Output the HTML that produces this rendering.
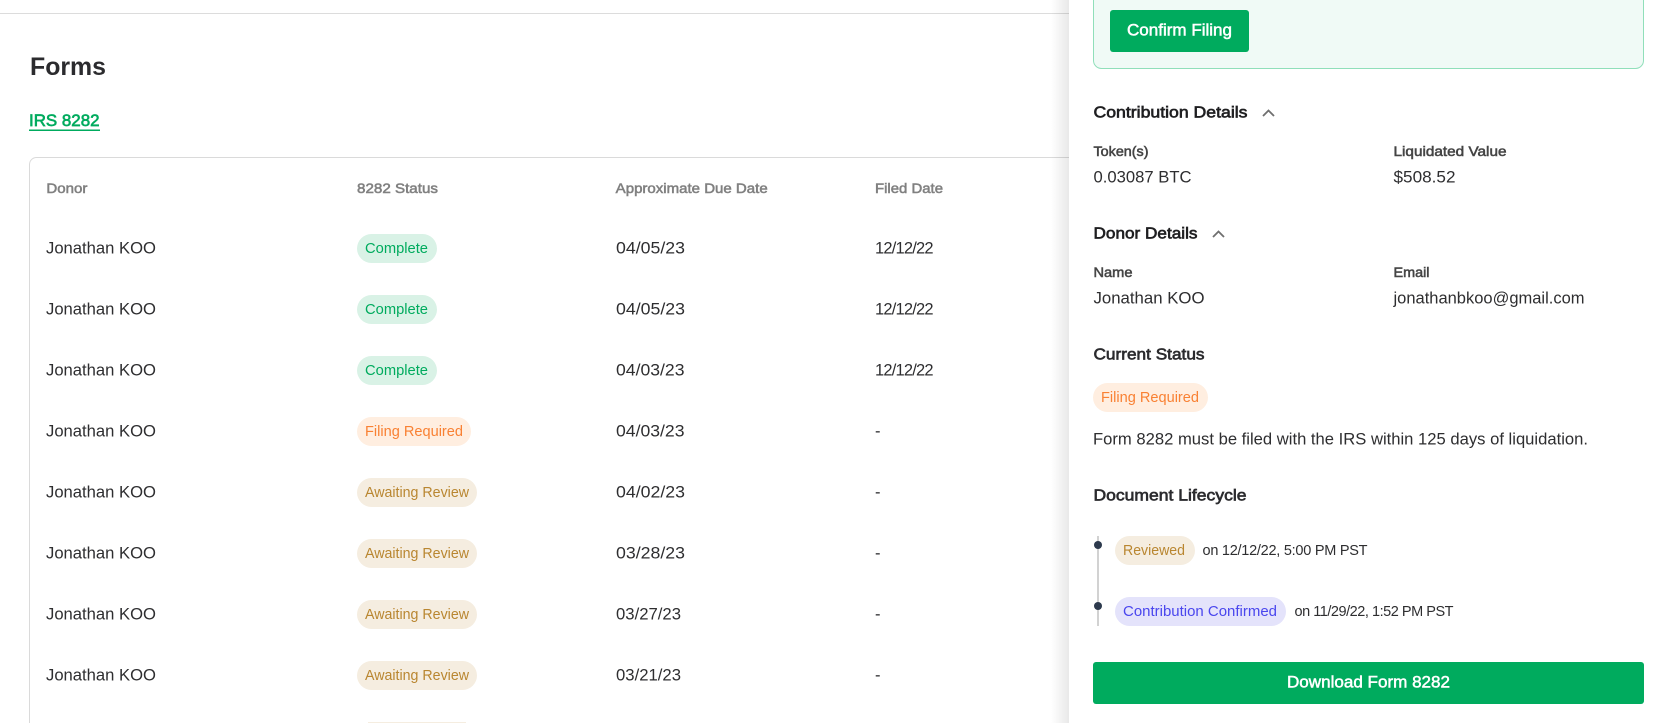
<!DOCTYPE html>
<html lang="en">
<head>
<meta charset="utf-8">
<title>Forms</title>
<style>
html,body{margin:0;padding:0;width:1666px;height:723px;overflow:hidden;background:#fff}
svg{display:block}
text{font-family:"Liberation Sans",sans-serif}
.h{font-size:14px;fill:#808080;stroke:#808080;stroke-width:.55px}
.c{font-size:16.5px;fill:#2e2e30}
.pt{font-size:14.5px}
.g{fill:#00ab5e}.gb{fill:#d9f2e6}
.o{fill:#f98133}.ob{fill:#ffeee0}
.a{fill:#b98630}.ab{fill:#f5ede0}
.b{fill:#4a46ee}.bb{fill:#e4e3fb}
.st{font-size:16px;fill:#1f1f21;stroke:#1f1f21;stroke-width:.65px}
.lb{font-size:14px;fill:#444;stroke:#444;stroke-width:.55px}
.v{font-size:16.5px;fill:#2e2e30}
.on{font-size:14.5px;fill:#2e2e30}
.btn{font-size:16.5px;fill:#fff;stroke:#fff;stroke-width:.5px}
</style>
</head>
<body>
<svg width="1666" height="723" viewBox="0 0 1666 723" xmlns="http://www.w3.org/2000/svg">
<defs>
<linearGradient id="sh" x1="0" x2="1" y1="0" y2="0">
<stop offset="0" stop-color="#000" stop-opacity="0"/>
<stop offset="1" stop-color="#000" stop-opacity=".09"/>
</linearGradient>
<g id="nm"><text class="c" x="46" y="253.500" textLength="110" lengthAdjust="spacingAndGlyphs">Jonathan KOO</text></g>
<g id="complete"><use href="#nm"/><rect class="gb" x="357" y="234" width="80" height="29" rx="14.5"/><text class="pt g" x="365" y="253" textLength="63" lengthAdjust="spacingAndGlyphs">Complete</text></g>
<g id="filing"><use href="#nm"/><rect class="ob" x="357" y="234" width="114" height="29" rx="14.5"/><text class="pt o" x="365" y="253" textLength="98" lengthAdjust="spacingAndGlyphs">Filing Required</text></g>
<g id="await"><use href="#nm"/><rect class="ab" x="357" y="234" width="120" height="29" rx="14.5"/><text class="pt a" x="365" y="253" textLength="104" lengthAdjust="spacingAndGlyphs">Awaiting Review</text></g>
</defs>

<rect x="0" y="13" width="1070" height="1" fill="#dcdcdc"/>

<text x="30" y="75" font-size="25" font-weight="bold" fill="#2b2b2e" textLength="76" lengthAdjust="spacingAndGlyphs">Forms</text>
<text x="29" y="126" font-size="16.5" fill="#00ab5e" stroke="#00ab5e" stroke-width=".65" textLength="70.5" lengthAdjust="spacingAndGlyphs">IRS 8282</text>
<rect x="29" y="129.500" width="71" height="1.500" fill="#00ab5e"/>

<path d="M29.500 723V164.500a7 7 0 0 1 7-7H1069" fill="none" stroke="#dadada"/>

<text class="h" x="46.400" y="193" textLength="41" lengthAdjust="spacingAndGlyphs">Donor</text>
<text class="h" x="357" y="193" textLength="81" lengthAdjust="spacingAndGlyphs">8282 Status</text>
<text class="h" x="615.700" y="193" textLength="152" lengthAdjust="spacingAndGlyphs">Approximate Due Date</text>
<text class="h" x="875" y="193" textLength="68" lengthAdjust="spacingAndGlyphs">Filed Date</text>

<use href="#complete"/>
<text class="c" x="616" y="253.500" textLength="69" lengthAdjust="spacingAndGlyphs">04/05/23</text>
<text class="c" x="875" y="253.500" textLength="58.500">12/12/22</text>

<use href="#complete" y="61"/>
<text class="c" x="616" y="314.500" textLength="69" lengthAdjust="spacingAndGlyphs">04/05/23</text>
<text class="c" x="875" y="314.500" textLength="58.500">12/12/22</text>

<use href="#complete" y="122"/>
<text class="c" x="616" y="375.500" textLength="68.500" lengthAdjust="spacingAndGlyphs">04/03/23</text>
<text class="c" x="875" y="375.500" textLength="58.500">12/12/22</text>

<use href="#filing" y="183"/>
<text class="c" x="616" y="436.500" textLength="68.500" lengthAdjust="spacingAndGlyphs">04/03/23</text>
<text class="c" x="875" y="436.500">-</text>

<use href="#await" y="244"/>
<text class="c" x="616" y="497.500" textLength="69" lengthAdjust="spacingAndGlyphs">04/02/23</text>
<text class="c" x="875" y="497.500">-</text>

<use href="#await" y="305"/>
<text class="c" x="616" y="558.500" textLength="69" lengthAdjust="spacingAndGlyphs">03/28/23</text>
<text class="c" x="875" y="558.500">-</text>

<use href="#await" y="366"/>
<text class="c" x="616" y="619.500" textLength="65" lengthAdjust="spacingAndGlyphs">03/27/23</text>
<text class="c" x="875" y="619.500">-</text>

<use href="#await" y="427"/>
<text class="c" x="616" y="680.500" textLength="65" lengthAdjust="spacingAndGlyphs">03/21/23</text>
<text class="c" x="875" y="680.500">-</text>

<rect class="ab" x="368" y="722" width="98" height="1"/>

<!-- side panel -->
<rect x="1051" y="0" width="18" height="723" fill="url(#sh)"/>
<rect x="1069" y="0" width="597" height="723" fill="#fff"/>

<path d="M1093.500 0V60.500a8 8 0 0 0 8 8H1635.500a8 8 0 0 0 8-8V0" fill="#f0faf6" stroke="#90dfba"/>
<rect class="g" x="1110" y="10" width="139" height="42" rx="3"/>
<text class="btn" x="1127" y="35.500" textLength="105" lengthAdjust="spacingAndGlyphs">Confirm Filing</text>

<text class="st" x="1093.500" y="117.500" textLength="154" lengthAdjust="spacingAndGlyphs">Contribution Details</text>
<path d="M1263 116L1268.500 110.500L1274 116" fill="none" stroke="#6f6f6f" stroke-width="1.800"/>
<text class="lb" x="1093.500" y="156" textLength="55" lengthAdjust="spacingAndGlyphs">Token(s)</text>
<text class="lb" x="1393.500" y="156" textLength="113" lengthAdjust="spacingAndGlyphs">Liquidated Value</text>
<text class="v" x="1093.500" y="182.500" textLength="98" lengthAdjust="spacingAndGlyphs">0.03087 BTC</text>
<text class="v" x="1393.500" y="182.500" textLength="62" lengthAdjust="spacingAndGlyphs">$508.52</text>

<text class="st" x="1093.500" y="238.500" textLength="104" lengthAdjust="spacingAndGlyphs">Donor Details</text>
<path d="M1213 237L1218.500 231.500L1224 237" fill="none" stroke="#6f6f6f" stroke-width="1.800"/>
<text class="lb" x="1093.500" y="277" textLength="39" lengthAdjust="spacingAndGlyphs">Name</text>
<text class="lb" x="1393.500" y="277" textLength="36" lengthAdjust="spacingAndGlyphs">Email</text>
<text class="v" x="1093.500" y="303.500" textLength="111" lengthAdjust="spacingAndGlyphs">Jonathan KOO</text>
<text class="v" x="1393.500" y="303.500" textLength="191" lengthAdjust="spacingAndGlyphs">jonathanbkoo@gmail.com</text>

<text class="st" x="1093.500" y="359.500" textLength="111" lengthAdjust="spacingAndGlyphs" style="fill:#2b2b2e;stroke:#2b2b2e">Current Status</text>
<rect class="ob" x="1093" y="383" width="115" height="29" rx="14.500"/>
<text class="pt o" x="1101" y="402" textLength="98" lengthAdjust="spacingAndGlyphs">Filing Required</text>
<text class="v" x="1093" y="444.500" textLength="495" lengthAdjust="spacingAndGlyphs">Form 8282 must be filed with the IRS within 125 days of liquidation.</text>

<text class="st" x="1093.500" y="500.500" textLength="153" lengthAdjust="spacingAndGlyphs" style="fill:#2b2b2e;stroke:#2b2b2e">Document Lifecycle</text>

<rect x="1097" y="536" width="2" height="90" fill="#d2d2d2"/>
<circle cx="1098" cy="545" r="4" fill="#2d3a4d"/>
<circle cx="1098" cy="606" r="4" fill="#2d3a4d"/>

<rect class="ab" x="1115" y="536" width="80" height="29" rx="14.500"/>
<text class="pt a" x="1123" y="555" textLength="62" lengthAdjust="spacingAndGlyphs">Reviewed</text>
<text class="on" x="1202.500" y="555" textLength="165">on 12/12/22, 5:00 PM PST</text>

<rect class="bb" x="1115" y="597" width="171" height="29" rx="14.500"/>
<text class="pt b" x="1123" y="616" textLength="154" lengthAdjust="spacingAndGlyphs">Contribution Confirmed</text>
<text class="on" x="1294.500" y="616" textLength="159">on 11/29/22, 1:52 PM PST</text>

<rect class="g" x="1093" y="662" width="551" height="42" rx="3"/>
<text class="btn" x="1287" y="687.500" textLength="163" lengthAdjust="spacingAndGlyphs">Download Form 8282</text>
</svg>
</body>
</html>
